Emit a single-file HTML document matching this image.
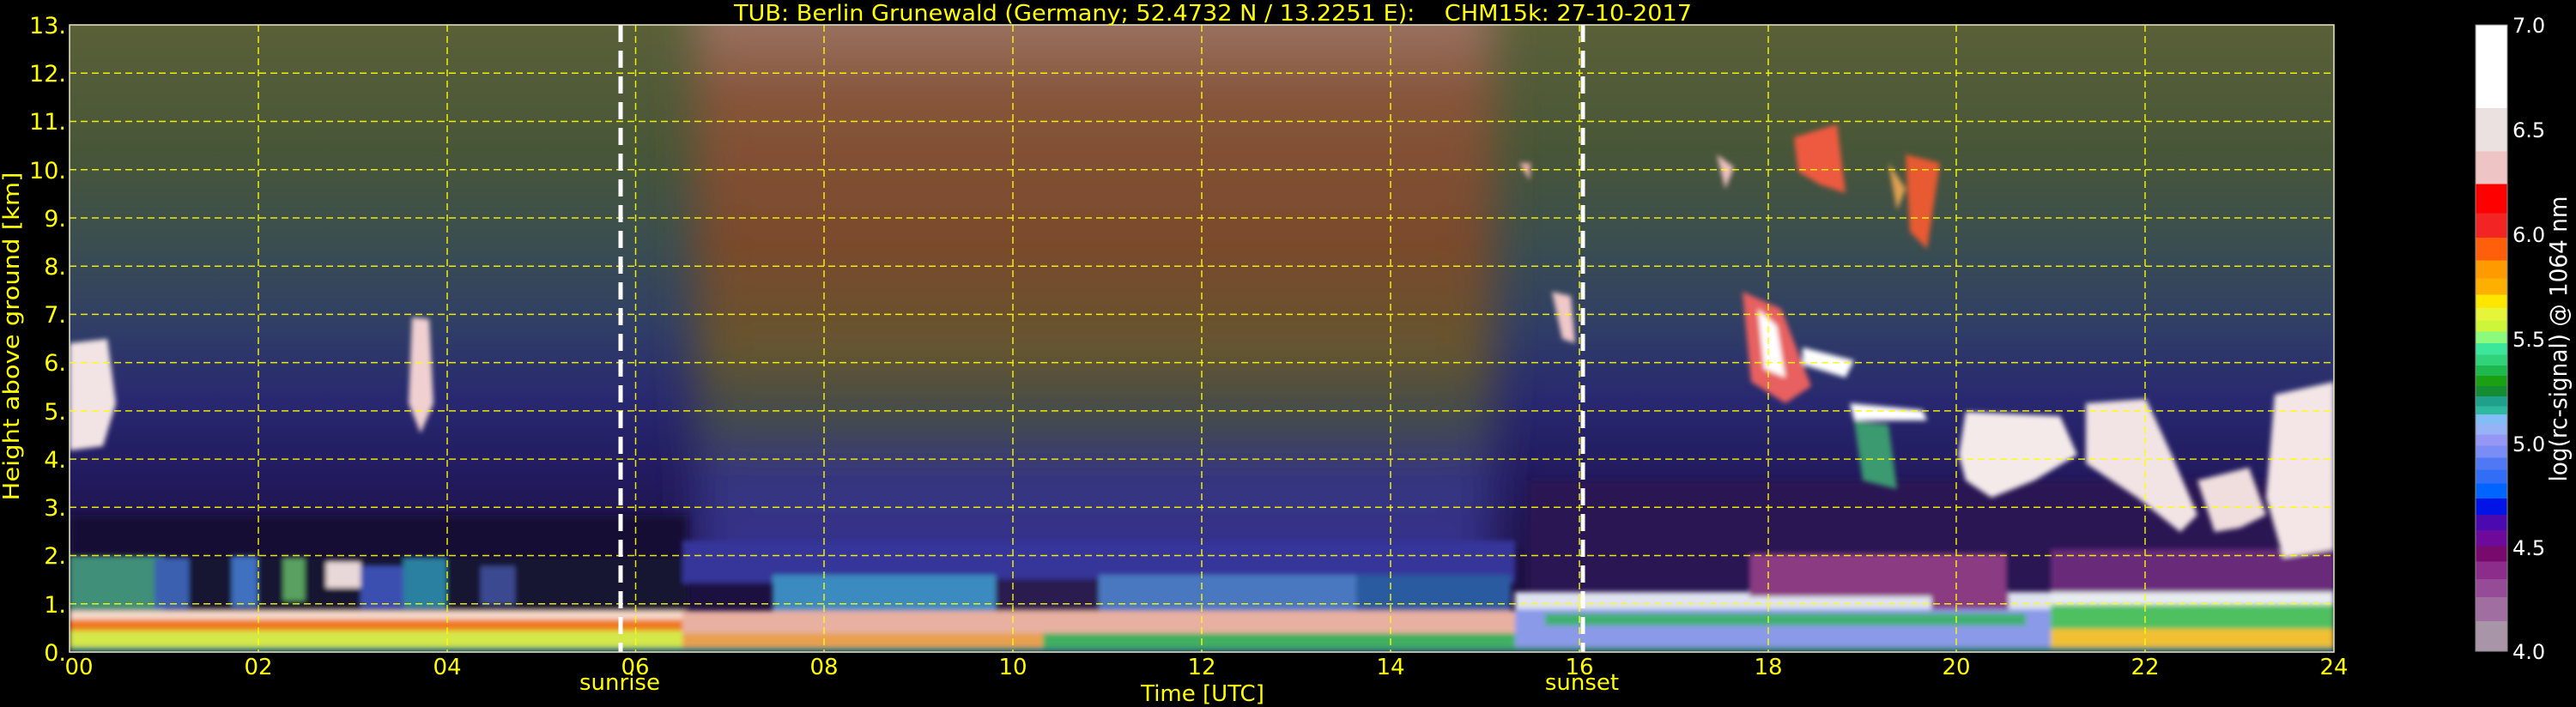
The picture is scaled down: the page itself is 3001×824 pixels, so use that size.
<!DOCTYPE html>
<html><head><meta charset="utf-8"><style>
html,body{margin:0;padding:0;background:#000;}
svg{display:block;}
text{font-family:"DejaVu Sans","Liberation Sans",sans-serif;}
</style></head><body>
<svg width="3001" height="824" viewBox="0 0 3001 824" xmlns="http://www.w3.org/2000/svg">
<defs>
<clipPath id="pc"><rect x="81" y="29" width="2638" height="731"/></clipPath>
<linearGradient id="night" x1="0" y1="29" x2="0" y2="760" gradientUnits="userSpaceOnUse">
<stop offset="0" stop-color="#5a6038"/>
<stop offset="0.2" stop-color="#485638"/>
<stop offset="0.35" stop-color="#3a4e50"/>
<stop offset="0.48" stop-color="#303e66"/>
<stop offset="0.6" stop-color="#282870"/>
<stop offset="0.72" stop-color="#221a5e"/>
<stop offset="0.85" stop-color="#1e1246"/>
<stop offset="1" stop-color="#1a0e38"/>
</linearGradient>
<linearGradient id="day" x1="0" y1="29" x2="0" y2="760" gradientUnits="userSpaceOnUse">
<stop offset="0" stop-color="#98705e"/>
<stop offset="0.12" stop-color="#86543a"/>
<stop offset="0.35" stop-color="#7a4a2c"/>
<stop offset="0.52" stop-color="#645430"/>
<stop offset="0.62" stop-color="#454c4a"/>
<stop offset="0.72" stop-color="#36367e"/>
<stop offset="0.85" stop-color="#34308e"/>
<stop offset="1" stop-color="#2c2878"/>
</linearGradient>
<linearGradient id="cb" x1="0" y1="29" x2="0" y2="759" gradientUnits="userSpaceOnUse">
<stop offset="0" stop-color="#ffffff"/><stop offset="0.133" stop-color="#ffffff"/>
<stop offset="0.133" stop-color="#ebe1e1"/><stop offset="0.202" stop-color="#ebe1e1"/>
<stop offset="0.202" stop-color="#efc4c4"/><stop offset="0.254" stop-color="#efc4c4"/>
<stop offset="0.254" stop-color="#ff0000"/><stop offset="0.301" stop-color="#ff0000"/>
<stop offset="0.301" stop-color="#f22424"/><stop offset="0.340" stop-color="#f22424"/>
<stop offset="0.340" stop-color="#ff5f0a"/><stop offset="0.376" stop-color="#ff5f0a"/>
<stop offset="0.376" stop-color="#ff9a00"/><stop offset="0.405" stop-color="#ff9a00"/>
<stop offset="0.405" stop-color="#ffaf00"/><stop offset="0.431" stop-color="#ffaf00"/>
<stop offset="0.431" stop-color="#ffe600"/><stop offset="0.452" stop-color="#ffe600"/>
<stop offset="0.452" stop-color="#e6f53a"/><stop offset="0.472" stop-color="#e6f53a"/>
<stop offset="0.472" stop-color="#cdf53a"/><stop offset="0.490" stop-color="#cdf53a"/>
<stop offset="0.490" stop-color="#8cfa7c"/><stop offset="0.508" stop-color="#8cfa7c"/>
<stop offset="0.508" stop-color="#3ce69b"/><stop offset="0.527" stop-color="#3ce69b"/>
<stop offset="0.527" stop-color="#30d27a"/><stop offset="0.544" stop-color="#30d27a"/>
<stop offset="0.544" stop-color="#1eb94e"/><stop offset="0.560" stop-color="#1eb94e"/>
<stop offset="0.560" stop-color="#1aa012"/><stop offset="0.577" stop-color="#1aa012"/>
<stop offset="0.577" stop-color="#168c32"/><stop offset="0.593" stop-color="#168c32"/>
<stop offset="0.593" stop-color="#1ea08c"/><stop offset="0.609" stop-color="#1ea08c"/>
<stop offset="0.609" stop-color="#2db9a0"/><stop offset="0.622" stop-color="#2db9a0"/>
<stop offset="0.622" stop-color="#82bef5"/><stop offset="0.638" stop-color="#82bef5"/>
<stop offset="0.638" stop-color="#96b4f5"/><stop offset="0.654" stop-color="#96b4f5"/>
<stop offset="0.654" stop-color="#9696f5"/><stop offset="0.672" stop-color="#9696f5"/>
<stop offset="0.672" stop-color="#7a8cf5"/><stop offset="0.691" stop-color="#7a8cf5"/>
<stop offset="0.691" stop-color="#5078f5"/><stop offset="0.710" stop-color="#5078f5"/>
<stop offset="0.710" stop-color="#326ef5"/><stop offset="0.732" stop-color="#326ef5"/>
<stop offset="0.732" stop-color="#0064ff"/><stop offset="0.756" stop-color="#0064ff"/>
<stop offset="0.756" stop-color="#0014e6"/><stop offset="0.782" stop-color="#0014e6"/>
<stop offset="0.782" stop-color="#4b0aaf"/><stop offset="0.807" stop-color="#4b0aaf"/>
<stop offset="0.807" stop-color="#6e0a9b"/><stop offset="0.832" stop-color="#6e0a9b"/>
<stop offset="0.832" stop-color="#780a6e"/><stop offset="0.857" stop-color="#780a6e"/>
<stop offset="0.857" stop-color="#8c2d8c"/><stop offset="0.885" stop-color="#8c2d8c"/>
<stop offset="0.885" stop-color="#964b96"/><stop offset="0.914" stop-color="#964b96"/>
<stop offset="0.914" stop-color="#a06ea0"/><stop offset="0.952" stop-color="#a06ea0"/>
<stop offset="0.952" stop-color="#a896a8"/><stop offset="1" stop-color="#a896a8"/>
</linearGradient>
<filter id="b30" x="-20%" y="-20%" width="140%" height="140%"><feGaussianBlur stdDeviation="25 6"/></filter>
<filter id="b6" x="-50%" y="-50%" width="200%" height="200%"><feGaussianBlur stdDeviation="5"/></filter>
<filter id="b3" x="-50%" y="-50%" width="200%" height="200%"><feGaussianBlur stdDeviation="3"/></filter>
</defs>

<rect width="3001" height="824" fill="#000"/>

<g clip-path="url(#pc)">
<rect x="81" y="29" width="2638" height="731" fill="url(#night)"/>
<rect x="810" y="0" width="930" height="640" fill="url(#day)" filter="url(#b30)"/>
<rect x="1780" y="560" width="940" height="140" fill="#2a1852" filter="url(#b6)"/>
<rect x="81" y="600" width="720" height="60" fill="#161036" filter="url(#b6)"/>

<g filter="url(#b3)">
<rect x="81" y="650" width="720" height="65" fill="#121830"/>
<rect x="81" y="648" width="110" height="66" fill="#3f8f78"/>
<rect x="180" y="650" width="40" height="60" fill="#3a60b0"/>
<rect x="270" y="648" width="30" height="60" fill="#4070c0"/>
<rect x="330" y="650" width="25" height="50" fill="#5aa060"/>
<rect x="380" y="655" width="40" height="30" fill="#e8d8d8"/>
<rect x="420" y="660" width="60" height="50" fill="#3a50b0"/>
<rect x="470" y="650" width="50" height="60" fill="#2a80a0"/>
<rect x="560" y="660" width="40" height="45" fill="#3a4a90"/>
<rect x="81" y="712" width="720" height="12" fill="#f4d8c8"/>
<rect x="81" y="722" width="720" height="14" fill="#f07a1c"/>
<rect x="81" y="735" width="720" height="20" fill="#d4e84a"/>
<rect x="795" y="630" width="970" height="50" fill="#34349a"/>
<rect x="900" y="670" width="260" height="45" fill="#3a8ac0"/>
<rect x="1160" y="675" width="120" height="40" fill="#2a1a50"/>
<rect x="1280" y="670" width="300" height="45" fill="#4a78c0"/>
<rect x="1580" y="670" width="180" height="45" fill="#2a5aa0"/>
<rect x="795" y="712" width="970" height="28" fill="#e8b0a0"/>
<rect x="795" y="738" width="420" height="18" fill="#e8a050"/>
<rect x="1215" y="738" width="550" height="18" fill="#40b060"/>
<rect x="1765" y="690" width="625" height="22" fill="#e0e4f0"/>
<rect x="2038" y="645" width="300" height="50" fill="#8a3a82"/>
<rect x="2250" y="690" width="90" height="40" fill="#8a3a82"/>
<rect x="1765" y="710" width="625" height="48" fill="#8a9ae8"/>
<rect x="1800" y="715" width="560" height="14" fill="#40b070"/>
<rect x="2389" y="640" width="330" height="55" fill="#6a2a7a"/>
<rect x="2389" y="690" width="330" height="18" fill="#e8ecf0"/>
<rect x="2389" y="705" width="330" height="28" fill="#50c060"/>
<rect x="2389" y="733" width="330" height="24" fill="#f0c030"/>
<rect x="81" y="754" width="2638" height="6" fill="#3a8a7a"/>

<path d="M81 400 L125 395 L135 470 L120 520 L81 525Z" fill="#f2e4e4"/>
<path d="M480 370 L500 372 L505 470 L490 505 L476 470Z" fill="#f0d0d0"/>
<path d="M2030 340 L2075 360 L2110 450 L2080 470 L2040 445Z" fill="#e86060"/>
<path d="M2048 360 L2070 380 L2080 440 L2055 430Z" fill="#ffffff"/>
<path d="M2100 405 L2160 420 L2150 440 L2100 425Z" fill="#ffffff"/>
<path d="M2155 470 L2240 478 L2245 490 L2160 490Z" fill="#ffffff"/>
<path d="M2160 490 L2200 495 L2210 570 L2170 560Z" fill="#3a9a70"/>
<path d="M2290 480 L2400 485 L2420 530 L2370 560 L2320 580 L2290 560 L2282 530Z" fill="#f4eaea"/>
<path d="M2430 470 L2500 465 L2530 530 L2560 600 L2540 620 L2490 580 L2460 560 L2430 540Z" fill="#f2e4e4"/>
<path d="M2560 560 L2620 545 L2640 600 L2610 615 L2580 620Z" fill="#f0dede"/>
<path d="M2650 460 L2719 445 L2719 640 L2660 650 L2640 580Z" fill="#f4e6e6"/>
<path d="M2090 160 L2140 145 L2150 225 L2120 215 L2095 200Z" fill="#ee5a40"/>
<path d="M2000 180 L2020 195 L2010 220Z" fill="#f0c0c0"/>
<path d="M2220 180 L2260 190 L2245 290 L2225 270Z" fill="#e85a30"/>
<path d="M2200 190 L2220 220 L2210 245Z" fill="#e0a050"/>
<path d="M1808 340 L1830 345 L1835 400 L1820 395Z" fill="#f0c8c8"/>
<path d="M1770 190 L1783 190 L1782 210 Z" fill="#f0b0b0"/>
</g>

<g stroke="#ffff00" stroke-width="1.5" stroke-dasharray="8 5" fill="none" opacity="0.9">
<line x1="81" y1="85.2" x2="2719" y2="85.2"/>
<line x1="81" y1="141.5" x2="2719" y2="141.5"/>
<line x1="81" y1="197.7" x2="2719" y2="197.7"/>
<line x1="81" y1="254" x2="2719" y2="254"/>
<line x1="81" y1="310.2" x2="2719" y2="310.2"/>
<line x1="81" y1="366.4" x2="2719" y2="366.4"/>
<line x1="81" y1="422.6" x2="2719" y2="422.6"/>
<line x1="81" y1="478.9" x2="2719" y2="478.9"/>
<line x1="81" y1="535.1" x2="2719" y2="535.1"/>
<line x1="81" y1="591.3" x2="2719" y2="591.3"/>
<line x1="81" y1="647.5" x2="2719" y2="647.5"/>
<line x1="81" y1="703.8" x2="2719" y2="703.8"/>
<line x1="301" y1="29" x2="301" y2="760"/>
<line x1="521" y1="29" x2="521" y2="760"/>
<line x1="740.5" y1="29" x2="740.5" y2="760"/>
<line x1="960" y1="29" x2="960" y2="760"/>
<line x1="1180" y1="29" x2="1180" y2="760"/>
<line x1="1400" y1="29" x2="1400" y2="760"/>
<line x1="1620" y1="29" x2="1620" y2="760"/>
<line x1="1840" y1="29" x2="1840" y2="760"/>
<line x1="2060" y1="29" x2="2060" y2="760"/>
<line x1="2279" y1="29" x2="2279" y2="760"/>
<line x1="2499" y1="29" x2="2499" y2="760"/>
</g>
<g stroke="#ffffff" stroke-width="5" stroke-dasharray="20 10">
<line x1="723" y1="29" x2="723" y2="760"/>
<line x1="1844" y1="29" x2="1844" y2="760"/>
</g>
</g>
<rect x="81" y="29" width="2638" height="731" fill="none" stroke="#e8e8c8" stroke-width="1.5"/>

<text x="1413" y="24" fill="#ffff00" font-size="26" text-anchor="middle" textLength="1116" lengthAdjust="spacingAndGlyphs" xml:space="preserve">TUB: Berlin Grunewald (Germany; 52.4732 N / 13.2251 E):    CHM15k: 27-10-2017</text>

<g fill="#ffff00" font-size="27" text-anchor="end">
<text x="77" y="39">13.</text><text x="77" y="95">12.</text><text x="77" y="151">11.</text>
<text x="77" y="208">10.</text><text x="77" y="264">9.</text><text x="77" y="320">8.</text>
<text x="77" y="376">7.</text><text x="77" y="432">6.</text><text x="77" y="489">5.</text>
<text x="77" y="545">4.</text><text x="77" y="601">3.</text><text x="77" y="657">2.</text>
<text x="77" y="714">1.</text><text x="77" y="770">0.</text>
</g>
<g fill="#ffff00" font-size="26" text-anchor="middle">
<text x="92" y="786">00</text><text x="301" y="786">02</text><text x="521" y="786">04</text>
<text x="740" y="786">06</text><text x="960" y="786">08</text><text x="1180" y="786">10</text>
<text x="1400" y="786">12</text><text x="1620" y="786">14</text><text x="1840" y="786">16</text>
<text x="2060" y="786">18</text><text x="2279" y="786">20</text><text x="2499" y="786">22</text>
<text x="2719" y="786">24</text>
<text x="722" y="804">sunrise</text>
<text x="1843" y="804">sunset</text>
<text x="1401" y="817">Time [UTC]</text>
</g>
<text transform="translate(22,392) rotate(-90)" fill="#ffff00" font-size="26" text-anchor="middle" textLength="383" lengthAdjust="spacingAndGlyphs">Height above ground [km]</text>

<rect x="2884" y="29" width="37" height="730" fill="url(#cb)" stroke="#888" stroke-width="1"/>
<g fill="#ffffff" font-size="24">
<text x="2927" y="38">7.0</text><text x="2927" y="160">6.5</text><text x="2927" y="282">6.0</text>
<text x="2927" y="404">5.5</text><text x="2927" y="526">5.0</text><text x="2927" y="647">4.5</text>
<text x="2927" y="768">4.0</text>
</g>
<text transform="translate(2990,395) rotate(-90)" fill="#ffffff" font-size="28" text-anchor="middle" textLength="333" lengthAdjust="spacingAndGlyphs">log(rc-signal) @ 1064 nm</text>
</svg>
</body></html>
